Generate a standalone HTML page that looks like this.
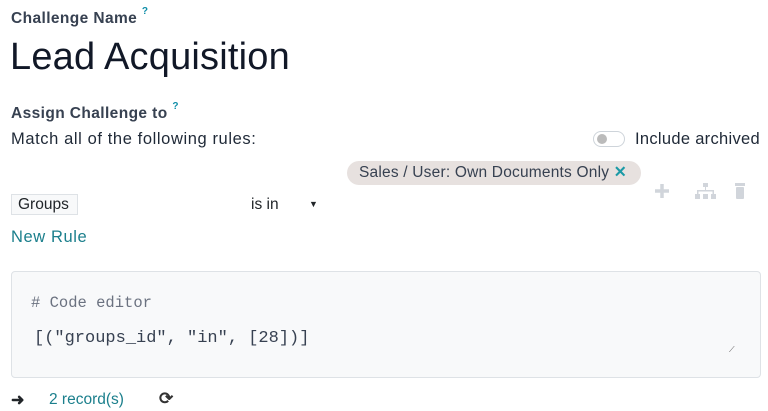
<!DOCTYPE html>
<html><head><style>
body{margin:0;width:768px;height:411px;background:#fff;font-family:"Liberation Sans",sans-serif;color:#212529;position:relative;overflow:hidden}
.a{position:absolute;white-space:nowrap}
.q{color:#0f8ea8;font-size:10px;font-weight:bold;vertical-align:top;position:relative;top:-4px}
.mono{font-family:"Liberation Mono",monospace}
.t{font-size:16.5px;letter-spacing:0.6px}
</style></head><body>
<div class="a" style="left:11px;top:10px;font-size:15.5px;letter-spacing:0.4px;font-weight:bold;color:#374151">Challenge Name <span class="q">?</span></div>
<div class="a" style="left:10px;top:36px;font-size:38px;color:#111827;letter-spacing:0.2px">Lead Acquisition</div>
<div class="a" style="left:11px;top:105px;font-size:15.5px;letter-spacing:0.4px;font-weight:bold;color:#374151">Assign Challenge to <span class="q">?</span></div>
<div class="a t" style="left:11px;top:130px;color:#1f2937">Match all of the following rules:</div>
<div class="a" style="left:593px;top:131px;width:32px;height:16px;border:1px solid #ced4da;border-radius:9px;box-sizing:border-box"><div style="position:absolute;left:3px;top:2px;width:10px;height:10px;border-radius:50%;background:#bbb"></div></div>
<div class="a" style="left:635px;top:130px;font-size:16.5px;letter-spacing:0.3px;color:#1f2937">Include archived</div>
<div class="a" style="left:347px;top:161px;width:294px;height:24px;border-radius:12px;background:#e7e1df;font-size:15.5px;letter-spacing:0.2px;line-height:24px;color:#374151;box-sizing:border-box;padding-left:12px">Sales / User: Own Documents Only <span style="color:#1b9aa6;font-weight:bold">✕</span></div>
<div class="a" style="left:11px;top:194px;width:67px;height:21px;border:1px solid #dee2e6;background:#f8f9fa;box-sizing:border-box;font-size:15.5px;line-height:19px;padding-left:6px">Groups</div>
<div class="a" style="left:251px;top:196px;font-size:15.5px">is in</div>
<div class="a" style="left:309px;top:199px;font-size:9px">▼</div>
<svg class="a" style="left:653px;top:182px" width="100" height="18">
<path d="M9 2v14M2 9h14" stroke="#d1d5db" stroke-width="3.5"/>
<g fill="#d1d5db"><rect x="50" y="1" width="5" height="4"/><rect x="52" y="5" width="1" height="4"/><rect x="44" y="8" width="17" height="1.5"/><rect x="44" y="8" width="1.5" height="4"/><rect x="59.5" y="8" width="1.5" height="4"/><rect x="42" y="12" width="5" height="5"/><rect x="50" y="12" width="5" height="5"/><rect x="58" y="12" width="5" height="5"/>
<rect x="82" y="1" width="10" height="3"/><rect x="83" y="5" width="8" height="12" rx="1"/></g>
</svg>
<div class="a t" style="left:11px;top:228px;color:#1b7f8c">New Rule</div>
<div class="a" style="left:11px;top:271px;width:750px;height:107px;border:1px solid #dee2e6;border-radius:4px;background:#f8f9fa;box-sizing:border-box"></div>
<div class="a mono" style="left:31px;top:294px;font-size:15.5px;color:#6b7280"># Code editor</div>
<div class="a mono" style="left:34px;top:329px;font-size:17px;color:#374151">[("groups_id", "in", [28])]</div>
<div class="a" style="left:729px;top:345px;font-size:8px;color:#555">⟋</div>
<div class="a" style="left:11px;top:390px;font-size:16px;font-weight:bold">➜</div>
<div class="a" style="left:49px;top:391px;font-size:15.5px;color:#1b7f8c">2 record(s)</div>
<div class="a" style="left:159px;top:389px;font-size:17px;font-weight:bold;color:#333">⟳</div>
</body></html>
